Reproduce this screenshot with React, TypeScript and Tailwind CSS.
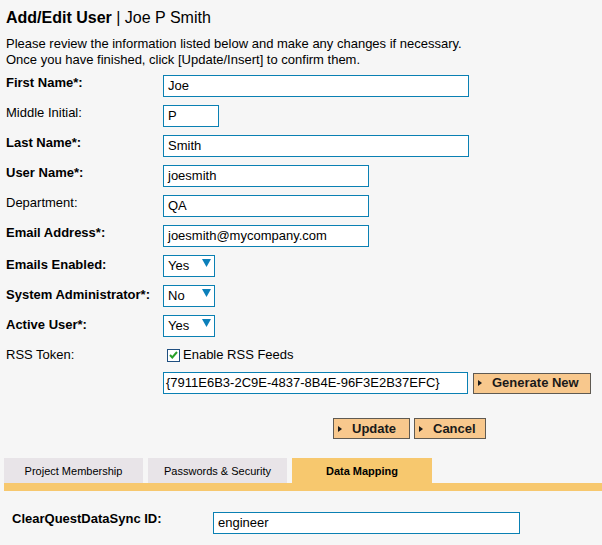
import React from "react";

function TextInput({ value, w }: { value: string; w: string }) {
  return (
    <div
      className={`flex h-[22px] ${w} items-center border border-[#0a80b3] bg-white px-[4px] text-[13px] leading-[16px] text-black`}
    >
      {value}
    </div>
  );
}

function SelectBox({ value }: { value: string }) {
  return (
    <div className="relative flex h-[22px] w-[52px] items-center border border-[#0a80b3] bg-white pl-[4px] text-[13px] leading-[16px]">
      {value}
      <svg
        className="absolute right-[3px] top-[3px]"
        width="9"
        height="8"
        viewBox="0 0 9 8"
      >
        <polygon points="0,0 9,0 4.5,8" fill="#0b7fba" />
      </svg>
    </div>
  );
}

function Btn({ label, w }: { label: string; w: string }) {
  return (
    <div
      className={`flex h-[21px] ${w} items-center border border-[#5f5a52] bg-[#f8c88d] pl-[4px] text-[13px] font-bold leading-[16px] text-[#1a1a1a]`}
    >
      <svg width="4" height="6" viewBox="0 0 4 6">
        <polygon points="0,0 4,3 0,6" fill="#1a1a1a" />
      </svg>
      <span className="ml-[10px]">{label}</span>
    </div>
  );
}

function Row({
  label,
  bold,
  children,
  pt = "pt-0",
}: {
  label: string;
  bold?: boolean;
  children: React.ReactNode;
  pt?: string;
}) {
  return (
    <div className="flex items-start">
      <div
        className={`w-[157px] shrink-0 text-[13px] leading-[16px] ${pt} ${
          bold ? "font-bold" : ""
        }`}
      >
        {label}
      </div>
      {children}
    </div>
  );
}

export default function App() {
  return (
    <div className="h-[545px] w-[602px] overflow-hidden bg-[#f6f6f6] font-['Liberation_Sans',Arial,sans-serif] text-black">
      <div className="px-[6px] pt-[8px]">
        <h1 className="text-[16px] leading-[20px]">
          <span className="font-bold">Add/Edit User</span> | Joe P Smith
        </h1>
        <p className="mt-[8px] text-[13px] leading-[16px]">
          Please review the information listed below and make any changes if
          necessary.
          <br />
          Once you have finished, click [Update/Insert] to confirm them.
        </p>

        <div className="mt-[7px] flex flex-col gap-[8px]">
          <Row label="First Name*:" bold>
            <TextInput value="Joe" w="w-[306px]" />
          </Row>
          <Row label="Middle Initial:">
            <TextInput value="P" w="w-[56px]" />
          </Row>
          <Row label="Last Name*:" bold>
            <TextInput value="Smith" w="w-[306px]" />
          </Row>
          <Row label="User Name*:" bold>
            <TextInput value="joesmith" w="w-[206px]" />
          </Row>
          <Row label="Department:">
            <TextInput value="QA" w="w-[206px]" />
          </Row>
          <Row label="Email Address*:" bold>
            <TextInput value="joesmith@mycompany.com" w="w-[206px]" />
          </Row>
          <Row label="Emails Enabled:" bold pt="pt-[2px]">
            <SelectBox value="Yes" />
          </Row>
          <Row label="System Administrator*:" bold pt="pt-[2px]">
            <SelectBox value="No" />
          </Row>
          <Row label="Active User*:" bold pt="pt-[2px]">
            <SelectBox value="Yes" />
          </Row>
          <div className="flex h-[20px] items-start">
            <div className="w-[157px] shrink-0 pt-[2px] text-[13px] leading-[16px]">
              RSS Token:
            </div>
            <div className="flex h-[20px] items-center pl-[4px] text-[13px] leading-[16px]">
              <div className="flex h-[13px] w-[13px] items-center justify-center border border-[#1f4f80] bg-white">
                <svg width="9" height="8" viewBox="0 0 9 8">
                  <path
                    d="M1 4 L3.3 6.5 L8 1"
                    stroke="#2aa02a"
                    strokeWidth="2"
                    fill="none"
                  />
                </svg>
              </div>
              <span className="ml-[3px]">Enable RSS Feeds</span>
            </div>
          </div>
        </div>

        <div className="mt-[7px] flex items-center pl-[157px]">
          <div className="flex h-[22px] w-[305px] items-center border border-[#0a80b3] bg-white px-[2px] text-[13px] leading-[16px]">
            {"{7911E6B3-2C9E-4837-8B4E-96F3E2B37EFC}"}
          </div>
          <div className="ml-[5px]">
            <Btn label="Generate New" w="w-[118px]" />
          </div>
        </div>

        <div className="mt-[24px] flex gap-[4px] pl-[327px]">
          <Btn label="Update" w="w-[77px]" />
          <Btn label="Cancel" w="w-[72px]" />
        </div>
      </div>

      <div className="mt-[19px] pl-[4px]">
        <div className="flex gap-[5px]">
          <div className="flex h-[25px] w-[139px] items-center justify-center bg-[#e8e4e8] text-[11px] leading-[14px]">
            Project Membership
          </div>
          <div className="flex h-[25px] w-[139px] items-center justify-center bg-[#e8e4e8] text-[11px] leading-[14px]">
            Passwords &amp; Security
          </div>
          <div className="flex h-[25px] w-[140px] items-center justify-center bg-[#f7c86e] text-[11px] font-bold leading-[14px]">
            Data Mapping
          </div>
        </div>
        <div className="h-[8px] bg-[#f7c86e]" />
      </div>

      <div className="mt-[21px] flex items-start pl-[12px]">
        <div className="w-[201px] shrink-0 text-[13px] font-bold leading-[16px] -mt-[1px]">
          ClearQuestDataSync ID:
        </div>
        <TextInput value="engineer" w="w-[307px]" />
      </div>
    </div>
  );
}
